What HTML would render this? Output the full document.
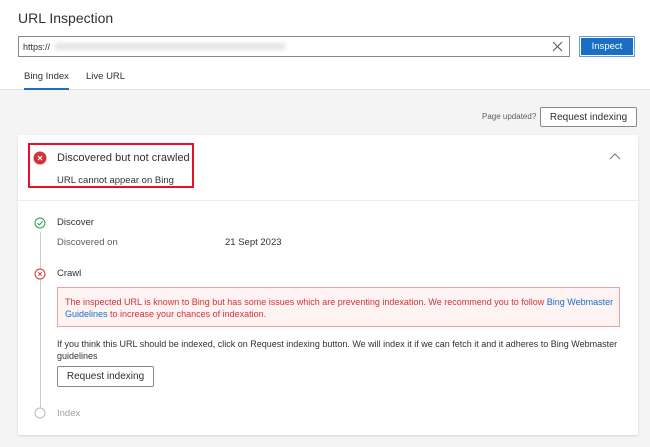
<!DOCTYPE html><html><head><style>
*{margin:0;padding:0;box-sizing:border-box}
body{width:650px;height:447px;background:#f4f4f4;font-family:"Liberation Sans",sans-serif;color:#323130;position:relative;overflow:hidden;font-size:9px}
.a{position:absolute;white-space:nowrap}
.btn{position:absolute;background:#fff;border:1px solid #8a8886;border-radius:2px;font-size:10px;display:flex;align-items:center;justify-content:center;color:#323130}
</style></head><body>
<div class="a" style="left:0;top:0;width:650px;height:90px;background:#fff;border-bottom:1px solid #e1e1e1"></div>
<div class="a" style="left:18px;top:10px;font-size:14px">URL Inspection</div>
<div class="a" style="left:18px;top:36px;width:552px;height:21px;border:1px solid #8a8886;background:#fff"></div>
<div class="a" style="left:23px;top:42px;font-size:9px">https://</div>
<div class="a" style="left:55px;top:43px;width:230px;height:7px;background:#e4e4e4;filter:blur(2px)"></div>
<svg class="a" style="left:552px;top:41px" width="11" height="11"><path d="M1 1L10 10M10 1L1 10" stroke="#555" stroke-width="1"/></svg>
<div class="a" style="left:579px;top:36px;width:56px;height:21px;border:1px solid #6a9cd6;padding:1px"><div style="background:#1a6fc4;width:100%;height:100%;color:#fff;font-size:9.5px;text-align:center;line-height:17px">Inspect</div></div>
<div class="a" style="left:24px;top:71px;font-size:9.5px;color:#323130">Bing Index</div>
<div class="a" style="left:86px;top:71px;font-size:9.5px">Live URL</div>
<div class="a" style="left:24px;top:88px;width:45px;height:2px;background:#1a6fc4"></div>
<div class="a" style="left:482px;top:112px;font-size:8px;color:#605e5c">Page updated?</div>
<div class="btn" style="left:540px;top:107px;width:97px;height:20px">Request indexing</div>
<div class="a" style="left:18px;top:135px;width:620px;height:300px;background:#fff;box-shadow:0 1px 2px rgba(0,0,0,.12)"></div>
<div class="a" style="left:18px;top:200px;width:620px;height:1px;background:#eee"></div>
<div class="a" style="left:28px;top:143px;width:166px;height:45px;border:2px solid #e81123"></div>
<svg class="a" style="left:33px;top:151px" width="14" height="14"><circle cx="7" cy="7" r="6.5" fill="#d13438"/><path d="M5 5L9 9M9 5L5 9" stroke="#fff" stroke-width="1.2"/></svg>
<div class="a" style="left:57px;top:152px;font-size:11px">Discovered but not crawled</div>
<div class="a" style="left:57px;top:175px;font-size:9.5px">URL cannot appear on Bing</div>
<svg class="a" style="left:609px;top:152px" width="12" height="8"><path d="M1 7L6 2L11 7" stroke="#777" fill="none"/></svg>
<div class="a" style="left:39.5px;top:232px;width:1px;height:176px;background:#ccc"></div>
<svg class="a" style="left:34px;top:217px" width="12" height="12"><circle cx="6" cy="6" r="5" fill="#fff" stroke="#2e9e47"/><path d="M3.5 6.2L5.3 8L8.6 4.3" stroke="#2e9e47" fill="none"/></svg>
<div class="a" style="left:57px;top:217px;font-size:9.5px">Discover</div>
<div class="a" style="left:57px;top:237px;font-size:9.5px;color:#605e5c">Discovered on</div>
<div class="a" style="left:225px;top:237px;font-size:9.5px">21 Sept 2023</div>
<svg class="a" style="left:34px;top:268px" width="12" height="12"><circle cx="6" cy="6" r="5" fill="#fff" stroke="#d13438"/><path d="M4.3 4.3L7.7 7.7M7.7 4.3L4.3 7.7" stroke="#d13438"/></svg>
<div class="a" style="left:57px;top:268px;font-size:9.5px">Crawl</div>
<div class="a" style="left:57px;top:287px;width:563px;height:40px;background:#fdf3f3;border:1px solid #eaa3a3"></div>
<div class="a" style="left:65px;top:296px;font-size:9px;color:#d13438;line-height:12px">The inspected URL is known to Bing but has some issues which are preventing indexation. We recommend you to follow <span style="color:#1a6fc4">Bing Webmaster</span><br><span style="color:#1a6fc4">Guidelines</span> to increase your chances of indexation.</div>
<div class="a" style="left:57px;top:338px;font-size:9px;line-height:12px">If you think this URL should be indexed, click on Request indexing button. We will index it if we can fetch it and it adheres to Bing Webmaster<br>guidelines</div>
<div class="btn" style="left:57px;top:366px;width:97px;height:21px">Request indexing</div>
<svg class="a" style="left:34px;top:407px" width="12" height="12"><circle cx="6" cy="6" r="5" fill="#fff" stroke="#bbb"/></svg>
<div class="a" style="left:57px;top:408px;font-size:9.5px;color:#a19f9d">Index</div>
</body></html>
